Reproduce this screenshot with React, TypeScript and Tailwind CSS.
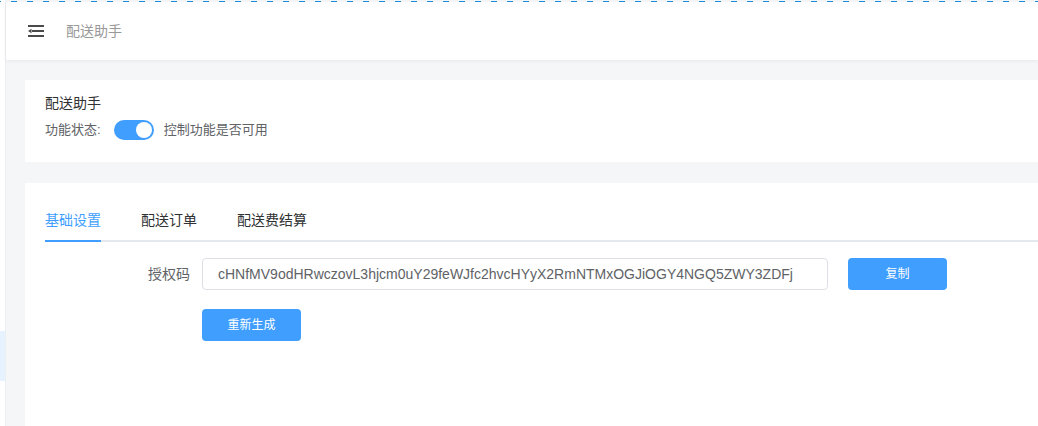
import React, { useState } from 'react';

const font = { fontFamily: '"Liberation Sans", "Noto Sans CJK SC", sans-serif' };

const MenuFoldIcon: React.FC = () => (
  <svg width="16" height="13" viewBox="0 0 16 13" fill="#4a4a4a">
    <rect x="0" y="0" width="16" height="2" />
    <rect x="4" y="5" width="12" height="2" />
    <path d="M0 6 L3.5 3.8 L3.5 8.2 Z" />
    <rect x="0" y="10" width="16" height="2" />
  </svg>
);

const App: React.FC = () => {
  const [enabled, setEnabled] = useState(true);
  const [tab, setTab] = useState(0);
  const tabs = ['基础设置', '配送订单', '配送费结算'];
  const token = 'cHNfMV9odHRwczovL3hjcm0uY29feWJfc2hvcHYyX2RmNTMxOGJiOGY4NGQ5ZWY3ZDFj';

  return (
    <div className="relative w-[1038px] h-[426px] overflow-hidden flex bg-white" style={font}>
      {/* dashed selection outline on top */}
      <svg className="absolute left-0 top-0 z-10" width="1038" height="3">
        <line x1="0" y1="1.5" x2="1038" y2="1.5" stroke="#1a8fe0" strokeWidth="1" strokeDasharray="6 10" strokeDashoffset="5" />
      </svg>

      {/* sidebar edge */}
      <div className="w-[5px] shrink-0 bg-white flex flex-col">
        <div className="mt-[331px] h-[50px] bg-[#e6f2fe]" />
      </div>

      {/* main */}
      <div className="flex-1 flex flex-col bg-[#f5f6f8] border-l border-[#eceef1]">
        <div className="h-[58px] mt-[2px] bg-white shadow-[0_1px_4px_rgba(0,21,41,0.06)] flex items-center pl-[22px] shrink-0">
          <MenuFoldIcon />
          <span className="ml-[22px] text-[14px] text-[#999]">配送助手</span>
        </div>

        <div className="pl-[19px] pt-[20px] flex flex-col gap-[21px]">
          <div className="bg-white pl-[20px] pt-[13px] pb-[22px]">
            <div className="text-[14px] leading-[20px] text-[#303133]">配送助手</div>
            <div className="flex items-center mt-[7px] text-[13px] text-[#606266]">
              <span>功能状态:</span>
              <button
                onClick={() => setEnabled(!enabled)}
                className={`ml-[13px] w-[40px] h-[20px] rounded-full flex items-center px-[2px] ${enabled ? 'bg-[#409eff] justify-end' : 'bg-[#dcdfe6] justify-start'}`}
              >
                <span className="w-[16px] h-[16px] rounded-full bg-white" />
              </button>
              <span className="ml-[10px]">控制功能是否可用</span>
            </div>
          </div>

          <div className="bg-white h-[260px] pl-[20px] pt-[17px]">
            <div className="flex border-b-2 border-[#e4e7ed]">
              {tabs.map((t, i) => (
                <div
                  key={t}
                  onClick={() => setTab(i)}
                  className={`relative h-[40px] leading-[40px] text-[14px] cursor-pointer ${i === 0 ? 'pr-[20px]' : 'px-[20px]'} ${tab === i ? 'text-[#409eff]' : 'text-[#303133]'}`}
                >
                  {t}
                  {tab === i && (
                    <div className={`absolute bottom-[-2px] h-[2px] bg-[#409eff] ${i === 0 ? 'left-0 right-[20px]' : 'left-[20px] right-[20px]'}`} />
                  )}
                </div>
              ))}
            </div>

            <div className="mt-[16px] flex items-center">
              <label className="w-[157px] pr-[12px] text-right text-[14px] text-[#606266]">授权码</label>
              <div className="w-[626px] h-[32px] border border-[#dcdfe6] rounded-[4px] flex items-center px-[15px] text-[14px] text-[#606266] whitespace-nowrap overflow-hidden">
                {token}
              </div>
              <button className="ml-[20px] w-[99px] h-[32px] rounded-[4px] bg-[#409eff] text-white text-[12px]">复制</button>
            </div>

            <div className="mt-[19px] pl-[157px]">
              <button className="w-[99px] h-[32px] rounded-[4px] bg-[#409eff] text-white text-[12px]">重新生成</button>
            </div>
          </div>
        </div>
      </div>
    </div>
  );
};

export default App;
